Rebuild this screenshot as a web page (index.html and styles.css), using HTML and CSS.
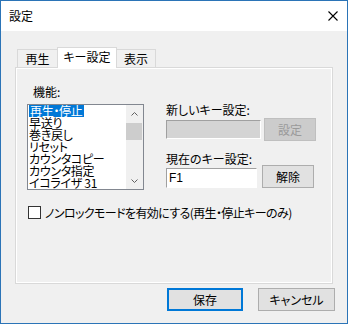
FILE: index.html
```html
<!DOCTYPE html>
<html lang="ja">
<head>
<meta charset="utf-8">
<link rel="stylesheet" href="styles.css">
</head>
<body>
<div class="window">
  <div class="titlebar">
    <span class="title">設定</span>
    <svg class="close" width="10" height="10" viewBox="0 0 10 10"><path d="M0.5 0.5 L9.5 9.5 M9.5 0.5 L0.5 9.5" stroke="#000" stroke-width="1.1" fill="none"/></svg>
  </div>
  <div class="body">
    <div class="tabs">
      <div class="tab t1">再生</div>
      <div class="tab active">キー設定</div>
      <div class="tab t3">表示</div>
    </div>
    <div class="panel">
      <div class="row">
        <div class="left">
          <div class="label func">機能:</div>
          <div class="listbox">
            <div class="items">
              <div class="item"><span class="sel">再生・停止</span></div>
              <div class="item">早送り</div>
              <div class="item">巻き戻し</div>
              <div class="item">リセット</div>
              <div class="item">カウンタコピー</div>
              <div class="item">カウンタ指定</div>
              <div class="item">イコライザ 31</div>
            </div>
            <div class="scrollbar">
              <div class="arrow"><svg width="7" height="4" viewBox="0 0 7 4"><path d="M0.5 3.5 L3.5 0.5 L6.5 3.5" stroke="#606060" fill="none"/></svg></div>
              <div class="thumb"></div>
              <div class="track"></div>
              <div class="arrow"><svg width="7" height="4" viewBox="0 0 7 4"><path d="M0.5 0.5 L3.5 3.5 L6.5 0.5" stroke="#606060" fill="none"/></svg></div>
            </div>
          </div>
        </div>
        <div class="right">
          <div class="label l1">新しいキー設定:</div>
          <div class="fieldrow r1">
            <div class="input disabled"></div>
            <div class="btn small disabled-btn">設定</div>
          </div>
          <div class="label l2">現在のキー設定:</div>
          <div class="fieldrow r2">
            <div class="input current">F1</div>
            <div class="btn small">解除</div>
          </div>
        </div>
      </div>
      <div class="check"><span class="box"></span><span class="checktext">ノンロックモードを有効にする(再生・停止キーのみ)</span></div>
    </div>
    <div class="buttons">
      <div class="btn big default">保存</div>
      <div class="btn big cancel">キャンセル</div>
    </div>
  </div>
</div>
</body>
</html>
```
FILE: styles.css
```css
* { box-sizing: border-box; }
html, body { margin: 0; padding: 0; }
body {
  font-family: "Noto Sans CJK JP", "Noto Sans", sans-serif;
  font-size: 12px;
  color: #000;
  font-feature-settings: "palt";
}
.window {
  width: 348px;
  height: 324px;
  border: 1px solid #2b74b7;
  background: #f0f0f0;
}
.titlebar {
  height: 30px;
  background: #fff;
  display: flex;
  align-items: center;
  padding-left: 8px;
  padding-right: 9px;
}
.title { line-height: 14px; }
.close { margin-left: auto; display: block; }
.body {
  padding-top: 16px;
  padding-left: 14px;
}
.tabs {
  display: flex;
  align-items: flex-end;
  height: 20px;
  margin-left: 2px;
  position: relative;
  z-index: 2;
}
.tab {
  height: 18px;
  border: 1px solid #d9d9d9;
  border-bottom: none;
  background: #f0f0f0;
  display: flex;
  align-items: center;
  justify-content: center;
  line-height: 14px;
}
.t1 { width: 41px; }
.active {
  width: 60px;
  height: 21px;
  margin-left: -1px;
  margin-bottom: -1px;
  background: #fff;
  position: relative;
  z-index: 2;
  padding-bottom: 2px;
}
.t3 { width: 40px; margin-left: -1px; }
.panel {
  width: 318px;
  height: 217px;
  border: 1px solid #d9d9d9;
  box-shadow: inset 0 0 0 1px #fff;
  padding-top: 17px;
  padding-left: 11px;
  position: relative;
  z-index: 1;
}
.row { display: flex; }
.left { width: 117px; }
.label { line-height: 14px; height: 14px; white-space: nowrap; }
.func { margin-left: 6px; margin-bottom: 5px; }
.listbox {
  width: 117px;
  height: 86px;
  border: 1px solid #828790;
  background: #fff;
  display: flex;
  overflow: hidden;
}
.items {
  flex: 1;
  padding-left: 1px;
  overflow: hidden;
}
.item {
  height: 12px;
  line-height: 12px;
  white-space: nowrap;
  letter-spacing: -0.3px;
}
.sel {
  display: inline-block;
  height: 12px;
  line-height: 12px;
  background: #0078d7;
  color: #fff;
  padding: 0 1px;
}
.scrollbar {
  width: 17px;
  background: #f0f0f0;
  display: flex;
  flex-direction: column;
}
.arrow {
  height: 17px;
  display: flex;
  align-items: center;
  justify-content: center;
}
.arrow svg { display: block; }
.thumb {
  height: 17px;
  margin: 1px 1px 0 0;
  background: #cdcdcd;
}
.track { flex: 1; }
.right { margin-left: 22px; }
.l1 { margin-top: 18px; }
.fieldrow { display: flex; }
.r1 { align-items: center; height: 23px; margin-top: 1px; }
.input {
  border-top: 1px solid #a0a0a0;
  border-left: 1px solid #a0a0a0;
  border-right: 1px solid #fff;
  border-bottom: 1px solid #fff;
}
.disabled {
  width: 95px;
  height: 19px;
  background: #d4d4d4;
}
.btn {
  display: flex;
  align-items: center;
  justify-content: center;
  background: #e1e1e1;
  border: 1px solid #adadad;
  line-height: 14px;
  white-space: nowrap;
}
.small { width: 52px; height: 23px; }
.r1 .small { margin-left: 3px; }
.disabled-btn {
  background: #cccccc;
  border-color: #bfbfbf;
  color: #9a9a9a;
}
.l2 { margin-top: 12px; line-height: 12px; height: 12px; }
.r2 { align-items: flex-end; justify-content: space-between; width: 148px; }
.current {
  width: 91px;
  height: 20px;
  background: #fff;
  padding-left: 2px;
  line-height: 18px;
  font-family: "Liberation Sans", "Noto Sans CJK JP", sans-serif;
}
.check {
  display: flex;
  align-items: center;
  height: 15px;
  margin-top: 15px;
  margin-left: 1px;
  white-space: nowrap;
}
.box {
  width: 13px;
  height: 13px;
  border: 1px solid #333;
  background: #fff;
  margin-right: 4px;
}
.checktext { line-height: 15px; letter-spacing: -0.6px; }
.buttons {
  display: flex;
  justify-content: flex-end;
  gap: 15px;
  margin-top: 4px;
  padding-right: 12px;
}
.big { height: 23px; }
.default { width: 76px; border: 2px solid #0078d7; }
.cancel { width: 77px; }
```
